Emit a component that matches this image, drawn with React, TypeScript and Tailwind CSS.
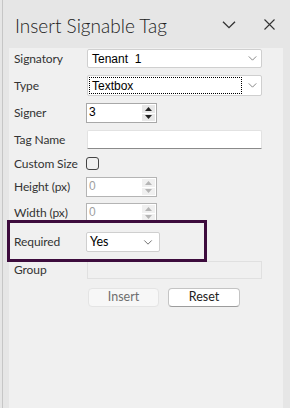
import React from "react";

const labelCls = "w-[72px] shrink-0 text-[12px] tracking-[-0.1px] text-[#333333]";
const ui = { fontFamily: 'Lato, "Noto Sans", sans-serif' };
const field = { fontFamily: '"Liberation Sans", Arial, sans-serif' };

const Chevron = ({ className = "" }: { className?: string }) => (
  <svg viewBox="0 0 10 6" className={className} fill="none" stroke="currentColor" strokeWidth="1">
    <path d="M0.5 0.5 L5 5 L9.5 0.5" />
  </svg>
);

const Spinner = ({ disabled }: { disabled?: boolean }) => {
  const c = disabled ? "#b5b5b5" : "#222222";
  return (
    <div className="flex w-[14px] flex-col gap-px py-px pr-px">
      <div className={`flex flex-1 items-center justify-center ${disabled ? "bg-[#f0f0f0]" : "bg-[#e8e8e8]"}`}>
        <svg width="7" height="4" viewBox="0 0 7 4">
          <path d="M3.5 0 L7 4 L0 4 Z" fill={c} />
        </svg>
      </div>
      <div className={`flex flex-1 items-center justify-center ${disabled ? "bg-[#f0f0f0]" : "bg-[#e8e8e8]"}`}>
        <svg width="7" height="4" viewBox="0 0 7 4">
          <path d="M0 0 L7 0 L3.5 4 Z" fill={c} />
        </svg>
      </div>
    </div>
  );
};

const Select = ({ value, width, focused, height }: { value: string; width: string; focused?: boolean; height: string }) => (
  <div className={`ml-px flex ${width} ${height} items-center rounded-[2px] border border-[#cfcfcf] bg-white`}>
    <div className="flex h-full flex-1 items-center p-px">
      <div
        className={`flex h-full flex-1 items-center pl-[2px] ${focused ? "border border-dotted border-black" : "border border-transparent"}`}
      >
        <span className="whitespace-pre text-[12px] leading-none text-black" style={field}>
          {value}
        </span>
      </div>
    </div>
    <div className="flex w-[18px] items-center justify-center text-[#707070]">
      <Chevron className="h-[5px] w-[9px]" />
    </div>
  </div>
);

const NumberBox = ({ value, disabled }: { value: string; disabled?: boolean }) => (
  <div className={`flex h-[20px] w-[71px] border ${disabled ? "border-[#b4b4b4]" : "border-[#a8a8a8]"} bg-white`}>
    <span
      className={`flex-1 pl-[2px] pt-[2px] text-[12px] leading-none ${disabled ? "text-[#a0a0a0]" : "text-black"}`}
      style={field}
    >
      {value}
    </span>
    <Spinner disabled={disabled} />
  </div>
);

export default function App() {
  return (
    <div className="h-[408px] w-[290px] overflow-hidden bg-[#e6e6e6] pl-[2px]" style={ui}>
      <div className="flex h-full flex-col border-l border-[#c6c6c6]">
        <div className="flex h-[48px] shrink-0 items-start">
          <h1 className="ml-[12px] mt-[13px] text-[19px] font-light leading-[26px] text-[#222222]">Insert Signable Tag</h1>
          <div className="ml-auto mt-[19px] flex items-center gap-[28px] pr-[15px] text-[#333333]">
            <Chevron className="h-[8px] w-[14px]" />
            <svg width="11" height="11" viewBox="0 0 11 11" stroke="currentColor" strokeWidth="1.1">
              <path d="M0.5 0.5 L10.5 10.5 M10.5 0.5 L0.5 10.5" />
            </svg>
          </div>
        </div>

        <div className="relative ml-[6px] w-[274px] flex-1 bg-[#f0f0f0] pl-[5px] pt-px">
          <div className="flex h-[19px] items-center">
            <span className={labelCls}>Signatory</span>
            <Select value="Tenant  1" width="w-[175px]" height="h-[19px]" />
          </div>

          <div className="mt-[7px] flex h-[21px] items-center">
            <span className={labelCls}>Type</span>
            <Select value="Textbox" width="w-[175px]" height="h-[21px]" focused />
          </div>

          <div className="mt-[7px] flex h-[20px] items-center">
            <span className={labelCls}>Signer</span>
            <NumberBox value="3" />
          </div>

          <div className="mt-[7px] flex h-[19px] items-center">
            <span className={labelCls}>Tag Name</span>
            <div className="ml-px h-[19px] w-[175px] rounded-t-[2px] border border-b-[#8a8a8a] border-[#e2e2e2] bg-white" />
          </div>

          <div className="mt-[8px] flex h-[13px] items-center">
            <span className={labelCls}>Custom Size</span>
            <div className="h-[13px] w-[13px] rounded-[3px] border border-[#444444] bg-[#f0f0f0]" />
          </div>

          <div className="mt-[7px] flex h-[20px] items-center">
            <span className={labelCls}>Height (px)</span>
            <NumberBox value="0" disabled />
          </div>

          <div className="mt-[6px] flex h-[20px] items-center">
            <span className={labelCls}>Width (px)</span>
            <NumberBox value="0" disabled />
          </div>

          <div className="mt-[9px] flex h-[20px] items-center">
            <span className={labelCls}>Required</span>
            <div className="flex h-[20px] w-[74px] items-center rounded-[2px] border border-[#cfcfcf] bg-white">
              <span className="flex-1 pl-[3px] text-[12.5px] leading-none text-black">Yes</span>
              <Chevron className="mr-[6px] h-[5px] w-[10px] text-[#555555]" />
            </div>
          </div>

          <div className="mt-[9px] flex h-[18px] items-center">
            <span className={labelCls}>Group</span>
            <div className="ml-px h-[18px] w-[175px] border border-[#e0e0e0] bg-[#f0f0f0]" />
          </div>

          <div className="mt-[9px] flex h-[19px] items-center pl-[74px]">
            <button className="h-[19px] w-[71px] rounded-[4px] border border-[#e4e4e4] bg-[#f7f7f7] text-[12.5px] leading-none text-[#6e6e6e]">
              Insert
            </button>
            <button className="ml-[9px] h-[19px] w-[72px] rounded-[4px] border border-[#c4c4c4] border-b-[#9c9c9c] bg-white text-[12.5px] leading-none text-[#222222]">
              Reset
            </button>
          </div>

          <div className="absolute left-[-2px] top-[172px] h-[42px] w-[200px] border-[3px] border-[#3d0c3d]" />
        </div>
      </div>
    </div>
  );
}
